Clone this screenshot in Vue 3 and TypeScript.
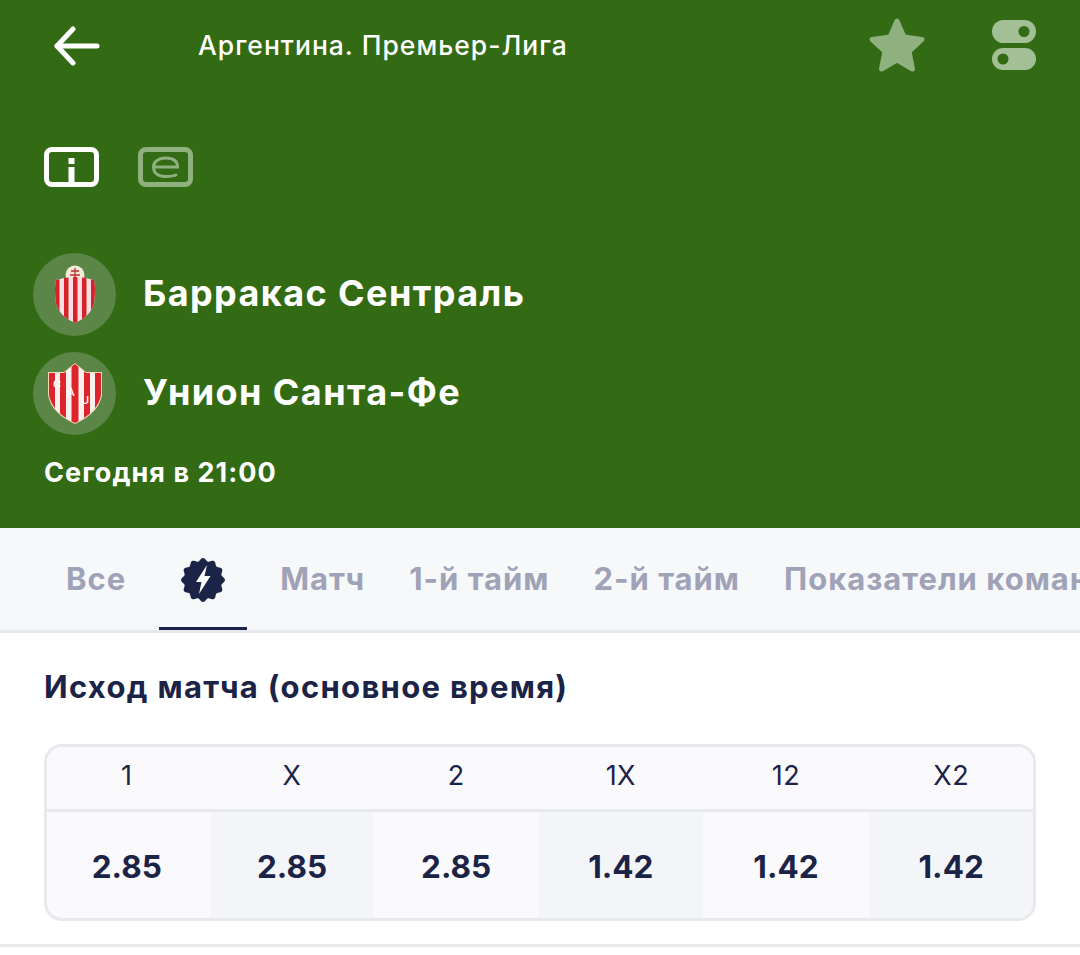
<script setup lang="ts">
const tabs = ['Матч', '1-й тайм', '2-й тайм', 'Показатели команд']
const odds = [
  { label: '1', value: '2.85' },
  { label: 'X', value: '2.85' },
  { label: '2', value: '2.85' },
  { label: '1X', value: '1.42' },
  { label: '12', value: '1.42' },
  { label: 'X2', value: '1.42' },
]
const badge = Array.from({ length: 145 }, (_, i) => {
  const a = (i / 144) * Math.PI * 2
  const r = 20.5 + 1.5 * Math.cos(a * 12)
  return `${(22 + r * Math.sin(a)).toFixed(2)} ${(22 - r * Math.cos(a)).toFixed(2)}`
}).join(' L')
const badgePath = `M${badge} Z`
</script>

<template>
  <div class="page">
    <header class="hero">
      <div class="topbar">
        <svg class="back" width="48" height="42" viewBox="0 0 48 42" fill="none" stroke="#fff" stroke-width="5" stroke-linecap="round" stroke-linejoin="round">
          <path d="M20 5 L4 22 L20 39" />
          <path d="M4 22 H44" />
        </svg>
        <div class="league">Аргентина. Премьер-Лига</div>
        <svg class="star" width="58" height="56" viewBox="0 0 58 56">
          <path fill="#8fb07f" stroke="#8fb07f" stroke-width="5" stroke-linejoin="round" d="M29 4 L36 20 L54 22.500 L41 34.500 L44.500 52 L29 43 L13.500 52 L17 34.500 L4 22.500 L22 20 Z" />
        </svg>
        <svg class="toggles" width="46" height="52" viewBox="0 0 46 52">
          <rect x="1" y="1" width="44" height="23" rx="11.500" fill="#a3bf95" />
          <circle cx="33" cy="12.500" r="5.500" fill="#336b14" />
          <rect x="1" y="29" width="44" height="22" rx="11" fill="#a3bf95" />
          <circle cx="12" cy="40" r="5.500" fill="#336b14" />
        </svg>
      </div>

      <div class="badges">
        <svg width="56" height="40" viewBox="0 0 56 40" fill="none">
          <rect x="2.500" y="2.500" width="50" height="35" rx="5.500" stroke="#fff" stroke-width="5" />
          <rect x="24.500" y="11" width="6" height="6" fill="#fff" />
          <rect x="24.500" y="20" width="6" height="16" fill="#fff" />
        </svg>
        <svg width="56" height="40" viewBox="0 0 56 40" fill="none">
          <rect x="2.500" y="2.500" width="50" height="35" rx="5.500" stroke="#8fb07f" stroke-width="5" />
          <path d="M16 20 H39.500 C39.500 13 34 11 28 11 C20 11 15.500 15 15.500 20 C15.500 26 20 29.500 28 29.500 C33 29.500 36 29 39 27.500" stroke="#8fb07f" stroke-width="3" />
        </svg>
      </div>

      <div class="team first">
        <div class="crest">
          <svg width="44" height="60" viewBox="0 0 44 60">
            <defs>
              <clipPath id="shield-one">
                <path d="M3 15 Q22 9 41 15 Q43 24 41 38 Q38 51 22 58 Q6 51 3 38 Q1 24 3 15 Z" />
              </clipPath>
            </defs>
            <circle cx="22" cy="10" r="9.500" fill="#f4ead8" />
            <path d="M18 6 H26 M22 3 V14 M17 10 H27" stroke="#b5312d" stroke-width="1.300" />
            <g clip-path="url(#shield-one)">
              <rect x="0" y="8" width="44" height="52" fill="#f9dfe2" />
              <rect x="2" y="8" width="4.500" height="52" fill="#d5232c" />
              <rect x="11" y="8" width="4.500" height="52" fill="#d5232c" />
              <rect x="20" y="8" width="4.500" height="52" fill="#d5232c" />
              <rect x="29" y="8" width="4.500" height="52" fill="#d5232c" />
              <rect x="38" y="8" width="5" height="52" fill="#d5232c" />
            </g>
          </svg>
        </div>
        <div class="team-name">Барракас Сентраль</div>
      </div>

      <div class="team">
        <div class="crest">
          <svg width="56" height="62" viewBox="0 0 56 62">
            <defs>
              <clipPath id="shield-two">
                <path d="M2 10 H17 L28 1 L39 10 H54 V32 Q51 49 28 60 Q5 49 2 32 Z" />
              </clipPath>
            </defs>
            <path d="M1 9 H17 L28 0 L39 9 H55 V32 Q52 50 28 61 Q4 50 1 32 Z" fill="#f3d9b8" />
            <g clip-path="url(#shield-two)">
              <rect x="0" y="0" width="56" height="62" fill="#faf0ee" />
              <rect x="1" y="0" width="7" height="62" fill="#dc242b" />
              <rect x="13" y="0" width="6" height="62" fill="#dc242b" />
              <rect x="24.500" y="0" width="7" height="62" fill="#dc242b" />
              <rect x="37" y="0" width="6" height="62" fill="#dc242b" />
              <rect x="48" y="0" width="7" height="62" fill="#dc242b" />
            </g>
            <text x="10" y="25" class="crest-letter">C</text>
            <text x="24" y="33" class="crest-letter">A</text>
            <text x="38" y="41" class="crest-letter">U</text>
          </svg>
        </div>
        <div class="team-name">Унион Санта-Фе</div>
      </div>

      <div class="date">Сегодня в 21:00</div>
    </header>

    <nav class="tabs">
      <div class="tab">Все</div>
      <div class="tab active">
        <svg width="44" height="44" viewBox="0 0 44 44">
          <path fill="#1b2347" :d="badgePath" />
          <path fill="#fff" d="M26 7 L15 24 H20.500 L18 36 L29.500 18 H23.500 Z" />
        </svg>
      </div>
      <div v-for="tab in tabs" :key="tab" class="tab">{{ tab }}</div>
    </nav>

    <section class="market">
      <h2 class="market-title">Исход матча (основное время)</h2>
      <div class="table">
        <div v-for="(o, i) in odds" :key="o.label" class="col" :class="{ shaded: i % 2 === 1, lead: i === 0 }">
          <div class="label">{{ o.label }}</div>
          <div class="value">{{ o.value }}</div>
        </div>
      </div>
    </section>
  </div>
</template>

<style>
html, body { margin: 0; background: #fff; overflow: hidden; }
</style>

<style scoped>
.page {
  width: 1080px;
  height: 955px;
  overflow: hidden;
  font-family: Inter, "Noto Sans", sans-serif;
  color: #1b2347;
  background: #fff;
}
.hero {
  height: 528px;
  box-sizing: border-box;
  background: #336b14;
  color: #fff;
  padding: 16px 43px 0 33px;
}
.topbar {
  display: flex;
  align-items: center;
  height: 58px;
}
.back { margin-left: 20px; flex: none; }
.league {
  margin-left: 97px;
  flex: 1;
  font-size: 26.500px;
  font-weight: 500;
  letter-spacing: 1px;
}
.star { margin-right: 65px; flex: none; }
.toggles { flex: none; }
.badges {
  display: flex;
  gap: 38px;
  margin: 73px 0 0 11px;
}
.team {
  display: flex;
  align-items: center;
  gap: 27px;
  margin-top: 16px;
}
.team.first { margin-top: 66px; }
.crest {
  width: 83px;
  height: 83px;
  border-radius: 50%;
  background: #5c8647;
  display: flex;
  align-items: center;
  justify-content: center;
  flex: none;
}
.crest-letter {
  font-size: 11px;
  font-weight: 500;
  fill: #fff;
  text-anchor: middle;
}
.team-name {
  font-size: 36px;
  font-weight: 700;
  letter-spacing: 1.400px;
  padding-bottom: 4px;
}
.date {
  margin: 21px 0 0 11px;
  font-size: 27px;
  font-weight: 700;
  letter-spacing: 1.050px;
}
.tabs {
  display: flex;
  height: 105px;
  box-sizing: border-box;
  padding-left: 44px;
  background: #f7f8fa;
  border-bottom: 3px solid #e6e8ec;
  overflow: hidden;
}
.tab {
  flex: none;
  height: 102px;
  box-sizing: border-box;
  padding: 0 22px 2px;
  display: flex;
  align-items: center;
  font-size: 31px;
  font-weight: 700;
  letter-spacing: 1px;
  color: #a0a3b8;
  white-space: nowrap;
}
.tab.active {
  margin: 0 11px;
  border-bottom: 3px solid #1b2347;
  padding: 5px 22px 0;
}
.market {
  padding: 0 44px;
  height: 314px;
  box-sizing: border-box;
  border-bottom: 3px solid #e8e9ed;
}
.market-title {
  margin: 0;
  padding-top: 35px;
  font-size: 31px;
  line-height: 38px;
  font-weight: 700;
  letter-spacing: 1.300px;
  color: #1b2347;
}
.table {
  display: grid;
  grid-template-columns: 164fr 163fr 166fr 164fr 167fr 164fr;
  margin-top: 38px;
  height: 177px;
  box-sizing: border-box;
  border: 3px solid #e8e9ed;
  border-radius: 18px;
  overflow: hidden;
  background: #fafafc;
}
.col.lead { padding-right: 4px; }
.label {
  height: 65px;
  box-sizing: border-box;
  display: flex;
  align-items: center;
  justify-content: center;
  font-size: 27px;
  letter-spacing: 0.500px;
  background: #fafafc;
  border-bottom: 3px solid #e8e9ed;
  padding-bottom: 6px;
}
.col.lead .label {
  margin-right: -4px;
  padding-right: 4px;
}
.value {
  height: 106px;
  box-sizing: border-box;
  padding-top: 2px;
  display: flex;
  align-items: center;
  justify-content: center;
  font-size: 31.500px;
  font-weight: 700;
}
.col.shaded .value { background: #f4f5f9; }
</style>
